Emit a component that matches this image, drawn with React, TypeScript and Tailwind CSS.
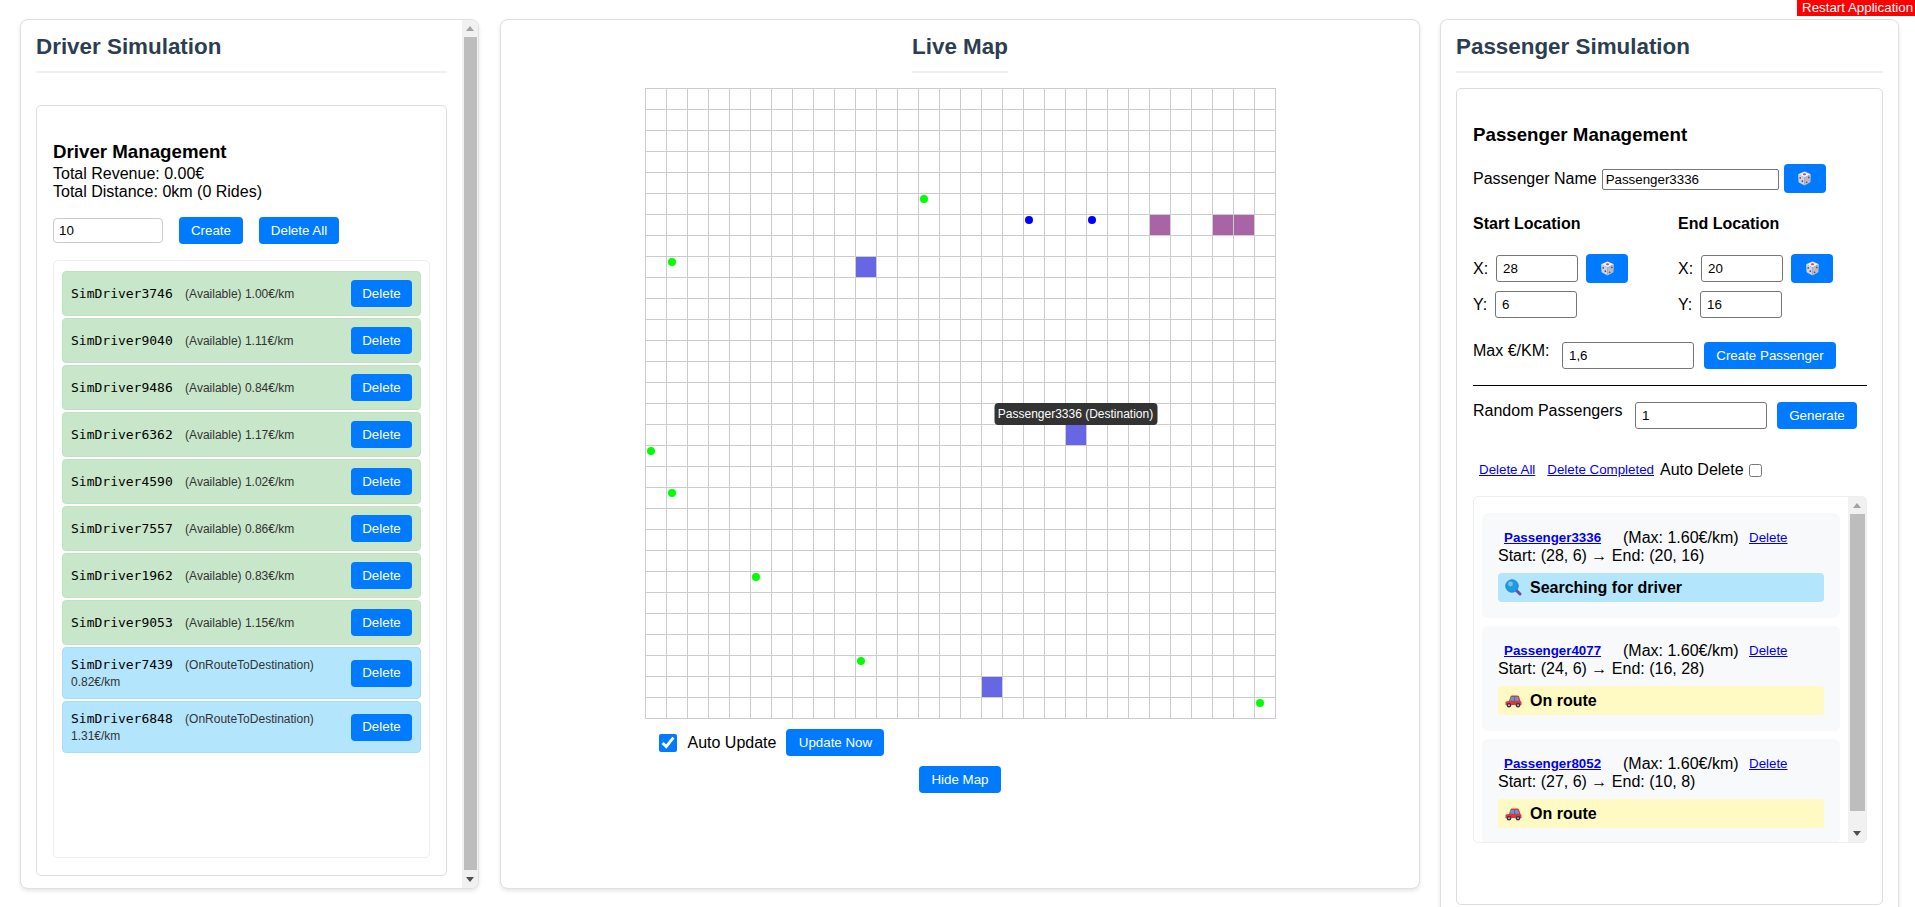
const drivers = [
  { name: "SimDriver3746", status: "Available", rate: "1.00" },
  { name: "SimDriver9040", status: "Available", rate: "1.11" },
  { name: "SimDriver9486", status: "Available", rate: "0.84" },
  { name: "SimDriver6362", status: "Available", rate: "1.17" },
  { name: "SimDriver4590", status: "Available", rate: "1.02" },
  { name: "SimDriver7557", status: "Available", rate: "0.86" },
  { name: "SimDriver1962", status: "Available", rate: "0.83" },
  { name: "SimDriver9053", status: "Available", rate: "1.15" },
  { name: "SimDriver7439", status: "OnRouteToDestination", rate: "0.82" },
  { name: "SimDriver6848", status: "OnRouteToDestination", rate: "1.31" },
]

const passengers = [
  { name: "Passenger3336", route: "Start: (28, 6) → End: (20, 16)", searching: true },
  { name: "Passenger4077", route: "Start: (24, 6) → End: (16, 28)", searching: false },
  { name: "Passenger8052", route: "Start: (27, 6) → End: (10, 8)", searching: false },
]

// [col, row] of everything on the map
const greenDots = ["13,5", "1,8", "0,17", "1,19", "5,23", "10,27", "29,29"]
const blueDots = ["18,6", "21,6"]
const purpleCells = ["24,6", "27,6", "28,6"]
const violetCells = ["10,8", "20,16", "16,28"]

const buttonClass = "h-[27px] shrink-0 rounded-[4px] bg-[#007bff] text-[13.33px] text-white"
const inputClass = "h-[27px] shrink-0 rounded-[3px] border border-[#767676] bg-white px-[6px] text-[13.33px] text-black outline-none"

function Dice() {
  return (
    <svg width="15" height="15" viewBox="0 0 14 14" className="mx-auto">
      <polygon points="7,0.5 13,3 7,6 1,3" fill="#efedf2" />
      <polygon points="1,3 7,6 7,13.5 1.5,10.5" fill="#d3d1db" />
      <polygon points="13,3 7,6 7,13.5 12.5,10.5" fill="#bcbac8" />
      <ellipse cx="7" cy="3" rx="1.5" ry="0.9" fill="#e5484d" />
      <circle cx="3" cy="6.5" r="0.8" fill="#55526a" />
      <circle cx="5" cy="9.5" r="0.8" fill="#55526a" />
      <circle cx="11" cy="6" r="0.8" fill="#55526a" />
      <circle cx="9" cy="10.5" r="0.8" fill="#55526a" />
    </svg>
  )
}

function Magnifier() {
  return (
    <svg width="17" height="17" viewBox="0 0 17 17" className="shrink-0">
      <line x1="10.5" y1="10.5" x2="15" y2="15" stroke="#6a4f9c" strokeWidth="3" strokeLinecap="round" />
      <circle cx="7" cy="7" r="6.2" fill="#1b9be8" stroke="#2b7fc4" strokeWidth="1" />
      <circle cx="5.5" cy="5" r="2.4" fill="#6cc8f5" />
    </svg>
  )
}

function Car() {
  return (
    <svg width="17" height="14" viewBox="0 0 17 14" className="shrink-0">
      <path d="M1 7.5 L4 7 L5.5 2.5 Q5.8 1.5 7 1.5 H12.5 Q13.6 1.5 14 2.5 L15.5 7 Q16.5 7.5 16.5 8.5 V11 H0.5 V8.5 Q0.5 7.8 1 7.5 Z" fill="#e0343c" />
      <polygon points="6,3 9,3 9,6.8 5,6.8" fill="#3ea6e0" />
      <polygon points="10,3 13,3 14.2,6.8 10,6.8" fill="#3ea6e0" />
      <circle cx="4" cy="11.2" r="2.3" fill="#3a3348" />
      <circle cx="13" cy="11.2" r="2.3" fill="#3a3348" />
      <circle cx="4" cy="11.2" r="0.9" fill="#c9c6d2" />
      <circle cx="13" cy="11.2" r="0.9" fill="#c9c6d2" />
    </svg>
  )
}

function Scrollbar({ thumbClass, widthClass }: { thumbClass: string; widthClass: string }) {
  return (
    <div className={`flex shrink-0 flex-col bg-[#f1f1f1] ${widthClass}`}>
      <div className="flex h-[17px] shrink-0 items-center justify-center">
        <svg width="8" height="5" viewBox="0 0 8 5"><polygon points="4,0 8,5 0,5" fill="#a3a3a3" /></svg>
      </div>
      <div className="min-h-0 flex-1 pr-px pl-[2px]">
        <div className={`bg-[#bdbdbd] ${thumbClass}`} />
      </div>
      <div className="flex h-[18px] shrink-0 items-center justify-center">
        <svg width="8" height="5" viewBox="0 0 8 5"><polygon points="0,0 8,0 4,5" fill="#505050" /></svg>
      </div>
    </div>
  )
}

function PanelTitle({ children }: { children: string }) {
  return (
    <h2 className="border-b-2 border-[#f0f0f0] pt-[14px] pb-[12px] text-[22.4px] leading-[25px] font-bold text-[#2c3e50]">
      {children}
    </h2>
  )
}

function DriverPanel() {
  return (
    <section className="flex h-[870px] w-[459px] shrink-0 overflow-hidden rounded-lg border border-[#e0e0e0] bg-white shadow-[0_2px_4px_rgba(0,0,0,0.1)]">
      <div className="min-w-0 flex-1 px-[15px]">
        <PanelTitle>Driver Simulation</PanelTitle>
        <div className="mt-[32px] h-[771px] rounded-[5px] border border-[#ddd] px-[16px] pt-[34px]">
          <h3 className="text-[18.72px] leading-[23px] font-bold">Driver Management</h3>
          <div className="mt-[2px] text-[16px] leading-[18px]">Total Revenue: 0.00€</div>
          <div className="text-[16px] leading-[18px]">Total Distance: 0km (0 Rides)</div>
          <div className="mt-[16px] flex items-center">
            <input readOnly value="10" className="h-[25px] w-[110px] rounded-[4px] border border-[#ccc] px-[5px] text-[13.33px] outline-none" />
            <button className={`${buttonClass} ml-[16px] w-[64px]`}>Create</button>
            <button className={`${buttonClass} ml-[16px] w-[80px]`}>Delete All</button>
          </div>
          <div className="mt-[16px] flex h-[598px] flex-col gap-[2px] rounded-[5px] border border-[#eee] px-[8px] py-[10px]">
            {drivers.map((driver) => (
              <div
                key={driver.name}
                className={`flex items-center justify-between rounded-[4px] border p-[8px] ${
                  driver.status === "Available" ? "border-[#c3e0c4] bg-[#c8e6c9]" : "border-[#a9dcf5] bg-[#b3e5fc]"
                }`}
              >
                <div className="mt-px -mb-px w-[272px] text-[12px] leading-[17px] text-[#333]">
                  <span className="font-['DejaVu_Sans_Mono',monospace] text-[13px] leading-none text-black">{driver.name}</span>{" "}
                  <span className="ml-[9px]">({driver.status})</span> {driver.rate}€/km
                </div>
                <button className={`${buttonClass} w-[61px]`}>Delete</button>
              </div>
            ))}
          </div>
        </div>
      </div>
      <Scrollbar widthClass="w-[16px]" thumbClass="h-full" />
    </section>
  )
}

function MapCell({ col, row }: { col: number; row: number }) {
  const key = `${col},${row}`
  const purple = purpleCells.includes(key)
  const violet = violetCells.includes(key)
  return (
    <div
      className={`relative h-[21px] w-[21px] border-r border-b border-[#ccc] ${
        purple ? "bg-[#a864a4]" : violet ? "bg-[#6767e6]" : ""
      }`}
    >
      {greenDots.includes(key) && <div className="m-px h-2 w-2 rounded-full bg-[#00ff00]" />}
      {blueDots.includes(key) && <div className="m-px h-2 w-2 rounded-full bg-[#0000ff]" />}
      {key === "20,16" && (
        <div className="absolute bottom-full left-1/2 z-10 w-[163px] -translate-x-1/2 rounded-[4px] bg-[#333] py-[3px] text-center text-[12px] leading-[16px] whitespace-nowrap text-white">
          Passenger3336 (Destination)
        </div>
      )}
    </div>
  )
}

function MapPanel() {
  const rows = Array.from({ length: 30 }, (_, row) => row)
  return (
    <section className="ml-[21px] flex h-[870px] w-[920px] shrink-0 flex-col items-center rounded-lg border border-[#e0e0e0] bg-white shadow-[0_2px_4px_rgba(0,0,0,0.1)]">
      <PanelTitle>Live Map</PanelTitle>
      <div className="mt-[15px] grid w-[631px] grid-cols-[repeat(30,21px)] border-t border-l border-[#ccc]">
        {rows.map((row) => rows.map((col) => <MapCell key={`${col}-${row}`} col={col} row={row} />))}
      </div>
      <div className="mt-[10px] flex w-[631px] items-center pl-[14px]">
        <input type="checkbox" readOnly checked className="h-[18px] w-[18px] accent-[#007bff]" />
        <span className="ml-[11px] text-[16px]">Auto Update</span>
        <button className={`${buttonClass} ml-[10px] w-[98px]`}>Update Now</button>
      </div>
      <button className={`${buttonClass} mt-[10px] w-[82px]`}>Hide Map</button>
    </section>
  )
}

function PassengerCard({ name, route, searching }: { name: string; route: string; searching: boolean }) {
  return (
    <div className="shrink-0 rounded-[6px] bg-[#f8f9fa] px-[16px] pt-[16px] pb-[16px]">
      <div className="flex text-[16px] leading-[18px]">
        <a className="ml-[6px] w-[119px] text-[13.33px] font-bold text-[#0000ee] underline">{name}</a>
        <span className="w-[126px]">(Max: 1.60€/km)</span>
        <a className="text-[13.33px] text-[#0000ee] underline">Delete</a>
      </div>
      <div className="text-[16px] leading-[18px]">{route}</div>
      <div
        className={`mt-[8px] flex h-[29px] items-center gap-[8px] rounded-[4px] px-[7px] text-[16px] font-bold ${
          searching ? "bg-[#b3e5fc]" : "bg-[#fff9c4]"
        }`}
      >
        {searching ? <Magnifier /> : <Car />}
        {searching ? "Searching for driver" : "On route"}
      </div>
    </div>
  )
}

function PassengerPanel() {
  return (
    <section className="ml-[20px] h-[900px] w-[459px] shrink-0 rounded-lg border border-[#e0e0e0] bg-white px-[15px] shadow-[0_2px_4px_rgba(0,0,0,0.1)]">
      <PanelTitle>Passenger Simulation</PanelTitle>
      <div className="mt-[15px] h-[817px] rounded-[5px] border border-[#ddd] pt-[34px] pr-[15px] pl-[16px]">
        <h3 className="text-[18.72px] leading-[23px] font-bold">Passenger Management</h3>
        <div className="mt-[18px] flex items-center text-[16px]">
          <span>Passenger Name</span>
          <input readOnly value="Passenger3336" className="mt-px ml-[5px] h-[21px] w-[177px] rounded-[2px] border border-[#767676] px-[3px] text-[13.33px] outline-none" />
          <button className={`${buttonClass} ml-[5px] h-[29px] w-[42px]`}><Dice /></button>
        </div>
        <div className="mt-[22px] flex text-[16px]">
          {[
            { title: "Start Location", x: "28", y: "6" },
            { title: "End Location", x: "20", y: "16" },
          ].map((loc) => (
            <div key={loc.title} className="w-[205px] shrink-0">
              <div className="leading-[18px] font-bold">{loc.title}</div>
              <div className="mt-[21px] flex h-[29px] items-center">
                <span className="w-[23px]">X:</span>
                <input readOnly value={loc.x} className={`${inputClass} w-[82px]`} />
                <button className={`${buttonClass} ml-[8px] h-[29px] w-[42px]`}><Dice /></button>
              </div>
              <div className="mt-[8px] flex items-center">
                <span className="w-[22px]">Y:</span>
                <input readOnly value={loc.y} className={`${inputClass} w-[82px]`} />
              </div>
            </div>
          ))}
        </div>
        <div className="mt-[24px] flex items-start text-[16px] leading-[18px]">
          <span className="w-[89px]">Max €/KM:</span>
          <input readOnly value="1,6" className={`${inputClass} w-[132px]`} />
          <button className={`${buttonClass} ml-[10px] w-[132px]`}>Create Passenger</button>
        </div>
        <div className="mt-[16px] h-px w-[394px] bg-black" />
        <div className="mt-[16px] flex items-start text-[16px] leading-[18px]">
          <span className="w-[162px]">Random Passengers</span>
          <input readOnly value="1" className={`${inputClass} w-[132px]`} />
          <button className={`${buttonClass} ml-[10px] w-[80px]`}>Generate</button>
        </div>
        <div className="mt-[29px] flex h-[24px] items-center pl-[6px] text-[16px]">
          <a className="text-[13.33px] text-[#0000ee] underline">Delete All</a>
          <a className="ml-[12px] text-[13.33px] text-[#0000ee] underline">Delete Completed</a>
          <span className="ml-[6px]">Auto Delete</span>
          <input type="checkbox" readOnly className="ml-[5px] h-[13px] w-[13px]" />
        </div>
        <div className="mt-[14px] flex h-[347px] overflow-hidden rounded-[5px] border border-[#eee]">
          <div className="flex min-w-0 flex-1 flex-col gap-[8px] overflow-hidden pt-[16px] pr-[8px] pl-[8px]">
            {passengers.map((p) => (
              <PassengerCard key={p.name} {...p} />
            ))}
          </div>
          <Scrollbar widthClass="w-[18px]" thumbClass="h-[297px]" />
        </div>
      </div>
    </section>
  )
}

export default function App() {
  return (
    <div className="relative flex h-screen overflow-hidden bg-white pt-[19px] pl-[20px] font-['Liberation_Sans',Arial,sans-serif] text-black">
      <DriverPanel />
      <MapPanel />
      <PassengerPanel />
      <button className="absolute top-0 right-0 h-[16px] w-[118px] bg-[#ff0000] pl-[5px] text-left text-[13.33px] leading-[16px] whitespace-nowrap text-white">
        Restart Application
      </button>
    </div>
  )
}
